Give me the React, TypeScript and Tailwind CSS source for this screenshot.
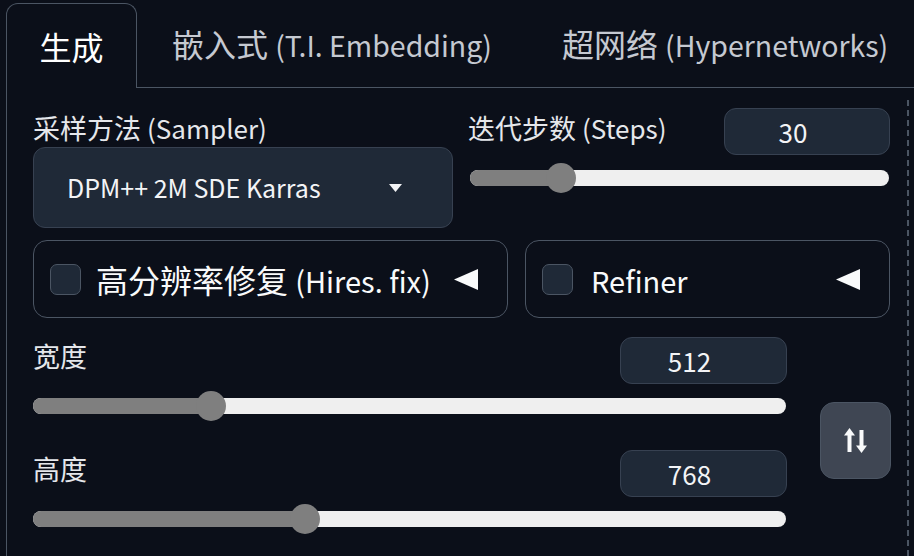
import React from "react";

const font = { fontFamily: '"Noto Sans CJK SC", "Noto Sans", sans-serif' };

type SliderProps = { value: number; min: number; max: number; width: number };

function Slider({ value, min, max, width }: SliderProps) {
  const thumb = 30;
  const pct = (value - min) / (max - min);
  const center = pct * (width - thumb) + thumb / 2;
  return (
    <div className="relative h-[30px]" style={{ width }}>
      <div className="absolute left-0 right-0 top-[7px] h-[16px] rounded-full bg-[#efefef] overflow-hidden">
        <div className="h-full bg-[#7f7f7f]" style={{ width: center }} />
      </div>
      <div
        className="absolute top-0 h-[30px] w-[30px] rounded-full bg-[#7f7f7f]"
        style={{ left: center - thumb / 2 }}
      />
    </div>
  );
}

function NumberBox({ value, w }: { value: string; w: string }) {
  return (
    <div
      className={`${w} h-[47px] rounded-[12px] bg-[#1f2937] border border-[#374151] flex items-center justify-center pr-[28px] text-[26px] leading-none text-[#f3f4f6]`}
    >
      {value}
    </div>
  );
}

function Triangle() {
  return (
    <svg width="24" height="21" viewBox="0 0 24 21">
      <polygon points="0,10.5 24,0 24,21" fill="#f9fafb" />
    </svg>
  );
}

function Accordion({ cjk, latin, w, gap }: { cjk: string; latin: string; w: string; gap: string }) {
  return (
    <div
      className={`${w} h-[78px] rounded-[14px] border-[1.5px] border-[#4b5563] flex items-center pl-[16px] pr-[29px]`}
    >
      <div className="w-[31px] h-[31px] rounded-[7px] bg-[#1f2937] border border-[#4b5563]" />
      <div className={`${gap} flex-1 text-[32px] leading-none text-[#f9fafb] whitespace-nowrap`}>
        {cjk}
        <span className="text-[29px]">{latin}</span>
      </div>
      <Triangle />
    </div>
  );
}

export default function App() {
  return (
    <div className="w-[914px] h-[556px] overflow-hidden bg-[#0b0f19] flex flex-col" style={font}>
      {/* tabs */}
      <div className="h-[88px] flex shrink-0">
        <div className="w-[6px] shrink-0" />
        <div className="shrink-0 mt-[3px] w-[131px] h-[85px] rounded-t-[12px] border-l border-t border-r border-[#4b5563] flex items-center justify-center text-[32px] leading-none text-white">
          生成
        </div>
        <div className="flex-1 min-w-0 flex items-center border-b border-[#4b5563] text-[32px] leading-none text-[#c5c9d1] whitespace-nowrap">
          <div className="pl-[35px] pr-[35px]">
            嵌入式 <span className="text-[28.5px]">(T.I. Embedding)</span>
          </div>
          <div className="pl-[35px]">
            超网络 <span className="text-[28.5px]">(Hypernetworks)</span>
          </div>
        </div>
      </div>

      {/* panel */}
      <div className="flex-1 ml-[6px] border-l border-[#4b5563] flex">
        <div className="mt-[12px] pl-[26px] pr-[16px] pt-[8px] border-r-2 border-dashed border-[#4b5563] flex flex-col">
          {/* row 1 */}
          <div className="flex gap-[15px]">
            <div className="w-[420px] flex flex-col">
              <div className="h-[39px] flex items-center text-[27px] leading-none text-[#e5e7eb] whitespace-nowrap">
                采样方法&nbsp;<span className="text-[26px]">(Sampler)</span>
              </div>
              <div className="h-[81px] rounded-[12px] bg-[#1f2937] border-[1.5px] border-[#374151] flex items-center pl-[33px] pr-[50px]">
                <div className="flex-1 text-[25px] leading-none text-[#f3f4f6]">DPM++ 2M SDE Karras</div>
                <svg width="13" height="8" viewBox="0 0 13 8">
                  <polygon points="0,0 13,0 6.5,8" fill="#f3f4f6" />
                </svg>
              </div>
            </div>
            <div className="w-[422px] flex flex-col">
              <div className="flex justify-between">
                <div className="h-[39px] flex items-center text-[27px] leading-none text-[#e5e7eb] whitespace-nowrap">
                  迭代步数&nbsp;<span className="text-[26px]">(Steps)</span>
                </div>
                <NumberBox value="30" w="w-[166px]" />
              </div>
              <div className="mt-[8px] pl-[2px]">
                <Slider value={30} min={1} max={150} width={419} />
              </div>
            </div>
          </div>

          {/* row 2 */}
          <div className="mt-[12px] flex gap-[17px]">
            <Accordion cjk="高分辨率修复 " latin="(Hires. fix)" w="w-[475px]" gap="ml-[15px]" />
            <Accordion cjk="" latin="Refiner" w="w-[365px]" gap="ml-[18px]" />
          </div>

          {/* row 3 */}
          <div className="mt-[19px] flex gap-[33px]">
            <div className="w-[754px] flex flex-col">
              <div className="flex justify-between items-start">
                <div className="h-[36px] flex items-center text-[27px] leading-none text-[#e5e7eb]">宽度</div>
                <NumberBox value="512" w="w-[167px]" />
              </div>
              <div className="mt-[7px]">
                <Slider value={512} min={64} max={2048} width={753} />
              </div>
              <div className="mt-[29px] flex justify-between items-start">
                <div className="h-[36px] flex items-center text-[27px] leading-none text-[#e5e7eb]">高度</div>
                <NumberBox value="768" w="w-[167px]" />
              </div>
              <div className="mt-[7px]">
                <Slider value={768} min={64} max={2048} width={753} />
              </div>
            </div>
            <div className="mt-[65px] w-[71px] h-[77px] rounded-[14px] bg-[#3f4653] border border-[#4b5563] flex items-center justify-center">
              <svg width="24" height="26" viewBox="0 0 24 26">
                <polygon points="5.5,0 11,7.5 0,7.5" fill="#f9fafb" />
                <rect x="3.5" y="6" width="4" height="18" fill="#f9fafb" />
                <rect x="15.5" y="2" width="4" height="17" fill="#f9fafb" />
                <polygon points="12,17.5 23,17.5 17.5,25" fill="#f9fafb" />
              </svg>
            </div>
          </div>
        </div>
      </div>
    </div>
  );
}
